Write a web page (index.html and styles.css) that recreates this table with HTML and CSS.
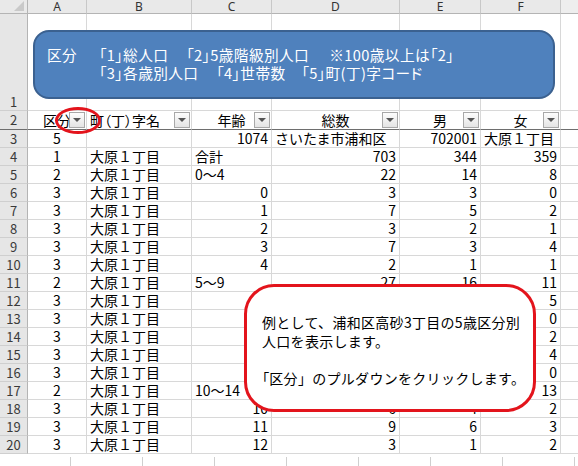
FILE: index.html
```html
<!DOCTYPE html>
<html lang="ja">
<head>
<meta charset="utf-8">
<link rel="stylesheet" href="styles.css">
</head>
<body>
<div class="sheet">
  <div class="grid">
    <div class="corner"><span class="tri"></span></div>
    <div class="ch">A</div><div class="ch">B</div><div class="ch">C</div><div class="ch">D</div><div class="ch">E</div><div class="ch">F</div><div class="ch g"></div>

    <div class="rh rh1">1</div><div></div><div></div><div></div><div></div><div></div><div></div><div class="g"></div>

    <div class="rh hr">2</div>
    <div class="hd m">区分<span class="f"></span></div>
    <div class="hd l pp">町（丁）字名<span class="f"></span></div>
    <div class="hd m">年齢<span class="f"></span></div>
    <div class="hd m">総数<span class="f"></span></div>
    <div class="hd m">男<span class="f"></span></div>
    <div class="hd m">女<span class="f"></span></div>
    <div class="g hr"></div>

    <div class="rh">3</div><div class="m">5</div><div></div><div class="n">1074</div><div>さいたま市浦和区</div><div class="n">702001</div><div>大原１丁目</div><div class="g"></div>
    <div class="rh">4</div><div class="m">1</div><div>大原１丁目</div><div>合計</div><div class="n">703</div><div class="n">344</div><div class="n">359</div><div class="g"></div>
    <div class="rh">5</div><div class="m">2</div><div>大原１丁目</div><div>0～4</div><div class="n">22</div><div class="n">14</div><div class="n">8</div><div class="g"></div>
    <div class="rh">6</div><div class="m">3</div><div>大原１丁目</div><div class="n">0</div><div class="n">3</div><div class="n">3</div><div class="n">0</div><div class="g"></div>
    <div class="rh">7</div><div class="m">3</div><div>大原１丁目</div><div class="n">1</div><div class="n">7</div><div class="n">5</div><div class="n">2</div><div class="g"></div>
    <div class="rh">8</div><div class="m">3</div><div>大原１丁目</div><div class="n">2</div><div class="n">3</div><div class="n">2</div><div class="n">1</div><div class="g"></div>
    <div class="rh">9</div><div class="m">3</div><div>大原１丁目</div><div class="n">3</div><div class="n">7</div><div class="n">3</div><div class="n">4</div><div class="g"></div>
    <div class="rh">10</div><div class="m">3</div><div>大原１丁目</div><div class="n">4</div><div class="n">2</div><div class="n">1</div><div class="n">1</div><div class="g"></div>
    <div class="rh">11</div><div class="m">2</div><div>大原１丁目</div><div>5～9</div><div class="n">27</div><div class="n">16</div><div class="n">11</div><div class="g"></div>
    <div class="rh">12</div><div class="m">3</div><div>大原１丁目</div><div class="n">5</div><div class="n">8</div><div class="n">3</div><div class="n">5</div><div class="g"></div>
    <div class="rh">13</div><div class="m">3</div><div>大原１丁目</div><div class="n">6</div><div class="n">3</div><div class="n">3</div><div class="n">0</div><div class="g"></div>
    <div class="rh">14</div><div class="m">3</div><div>大原１丁目</div><div class="n">7</div><div class="n">6</div><div class="n">4</div><div class="n">2</div><div class="g"></div>
    <div class="rh">15</div><div class="m">3</div><div>大原１丁目</div><div class="n">8</div><div class="n">7</div><div class="n">3</div><div class="n">4</div><div class="g"></div>
    <div class="rh">16</div><div class="m">3</div><div>大原１丁目</div><div class="n">9</div><div class="n">3</div><div class="n">3</div><div class="n">0</div><div class="g"></div>
    <div class="rh">17</div><div class="m">2</div><div>大原１丁目</div><div>10～14</div><div class="n">29</div><div class="n">16</div><div class="n">13</div><div class="g"></div>
    <div class="rh">18</div><div class="m">3</div><div>大原１丁目</div><div class="n">10</div><div class="n">6</div><div class="n">4</div><div class="n">2</div><div class="g"></div>
    <div class="rh">19</div><div class="m">3</div><div>大原１丁目</div><div class="n">11</div><div class="n">9</div><div class="n">6</div><div class="n">3</div><div class="g"></div>
    <div class="rh">20</div><div class="m">3</div><div>大原１丁目</div><div class="n">12</div><div class="n">3</div><div class="n">1</div><div class="n">2</div><div class="g"></div>
  </div>
  <div class="footer"></div>

  <div class="note">
    <span class="note-label">区分</span>
    <div class="note-lines">
      <div class="note-line"><span>「1」総人口</span><span>「2」5歳階級別人口</span><span class="wide">※100歳以上は「2」</span></div>
      <div class="note-line"><span>「3」各歳別人口</span><span>「4」世帯数</span><span class="tight">「5」町(丁)字コード</span></div>
    </div>
  </div>

  <div class="ring"></div>

  <div class="callout">
    <p>例として、浦和区高砂3丁目の5歳区分別<br>人口を表示します。</p>
    <p><span class="br">「</span>区分」のプルダウンをクリックします。</p>
  </div>
</div>
</body>
</html>
```

FILE: styles.css
```css
body {
  margin: 0;
  background: #fff;
  font-family: "Noto Sans CJK JP", "Noto Sans", sans-serif;
}

.sheet {
  position: relative;
  width: 578px;
  height: 466px;
  overflow: hidden;
  background: #fff;
}

.grid {
  display: grid;
  grid-template-columns: 28px 59px 105px 80px 128px 81px 80px 17px;
  grid-template-rows: 14px 97px 19px repeat(18, 18px);
}

.grid > div {
  box-sizing: border-box;
  border-right: 1px solid #d8d8d8;
  border-bottom: 1px solid #d8d8d8;
  font-size: 14px;
  line-height: 17px;
  white-space: nowrap;
  padding: 0 3px;
  color: #000;
}

.grid > .corner {
  position: relative;
  background: #e9e9e9;
  border-right-color: #b4b4b4;
  border-bottom-color: #b4b4b4;
}

.tri {
  position: absolute;
  right: 3px;
  bottom: 2px;
  width: 0;
  height: 0;
  border-left: 10px solid transparent;
  border-bottom: 10px solid #c9c9c9;
}

.grid > .ch {
  background: #e9e9e9;
  border-right-color: #c8c8c8;
  border-bottom-color: #b4b4b4;
  text-align: center;
  font-family: "Noto Sans", sans-serif;
  font-size: 12px;
  line-height: 13px;
  color: #333;
}

.grid > .ch.g {
  background: #eeeeee;
}

.grid > .rh {
  background: #e6e6e6;
  border-right-color: #b4b4b4;
  border-bottom-color: #cfcfcf;
  text-align: center;
  color: #3a3a3a;
  font-size: 13px;
  padding: 0;
}

.grid > .rh1 {
  display: flex;
  align-items: flex-end;
  justify-content: center;
}

.grid > .hr,
.grid > .hd {
  border-bottom-color: #6e6e6e;
}

.grid > .hd {
  position: relative;
  line-height: 19px;
}

.pp {
  font-feature-settings: "palt";
}

.m { text-align: center; }
.n { text-align: right; }
.l { text-align: left; }

.grid > .g {
  border-right: none;
}

.f {
  position: absolute;
  right: 1px;
  top: 1px;
  width: 16px;
  height: 16px;
  box-sizing: border-box;
  border: 1px solid #a8a8a8;
  background: linear-gradient(#fdfdfd, #e4e4e4);
}

.f::after {
  content: "";
  position: absolute;
  left: 3px;
  top: 5px;
  width: 0;
  height: 0;
  border-left: 4px solid transparent;
  border-right: 4px solid transparent;
  border-top: 4px solid #555;
}

.footer {
  height: 12px;
  background-image: repeating-linear-gradient(to right, transparent 0, transparent 70px, #cfcfcf 70px, #cfcfcf 71px, transparent 71px, transparent 72px);
  background-size: 100% 9px;
  background-position: 0 3px;
  background-repeat: no-repeat;
}

.note {
  position: absolute;
  left: 33px;
  top: 30px;
  width: 522px;
  height: 69px;
  box-sizing: border-box;
  background: #4f81bd;
  border: 2px solid #3b6190;
  border-radius: 16px;
  color: #fff;
  font-size: 14.67px;
  line-height: 18px;
  letter-spacing: 0.4px;
  padding: 14px 0 0 12px;
  display: flex;
  gap: 22px;
  font-feature-settings: "palt";
}

.note-lines {
  display: flex;
  flex-direction: column;
}

.note-line {
  display: flex;
  gap: 18px;
}

.note-line .wide {
  margin-left: 2px;
}

.note-line .tight {
  margin-left: -2px;
}

.ring {
  position: absolute;
  left: 55px;
  top: 107px;
  width: 46px;
  height: 27px;
  box-sizing: border-box;
  border: 3px solid #e3141c;
  border-radius: 50%;
}

.callout {
  position: absolute;
  left: 244px;
  top: 284px;
  width: 292px;
  height: 128px;
  box-sizing: border-box;
  border: 3px solid #e3141c;
  border-radius: 30px;
  background: #fff;
  padding: 26px 0 0 15px;
  font-size: 14px;
  line-height: 18.5px;
  letter-spacing: 0.3px;
  color: #000;
}

.callout p {
  margin: 0 0 18.5px;
}

.br {
  font-feature-settings: "palt";
}
```
